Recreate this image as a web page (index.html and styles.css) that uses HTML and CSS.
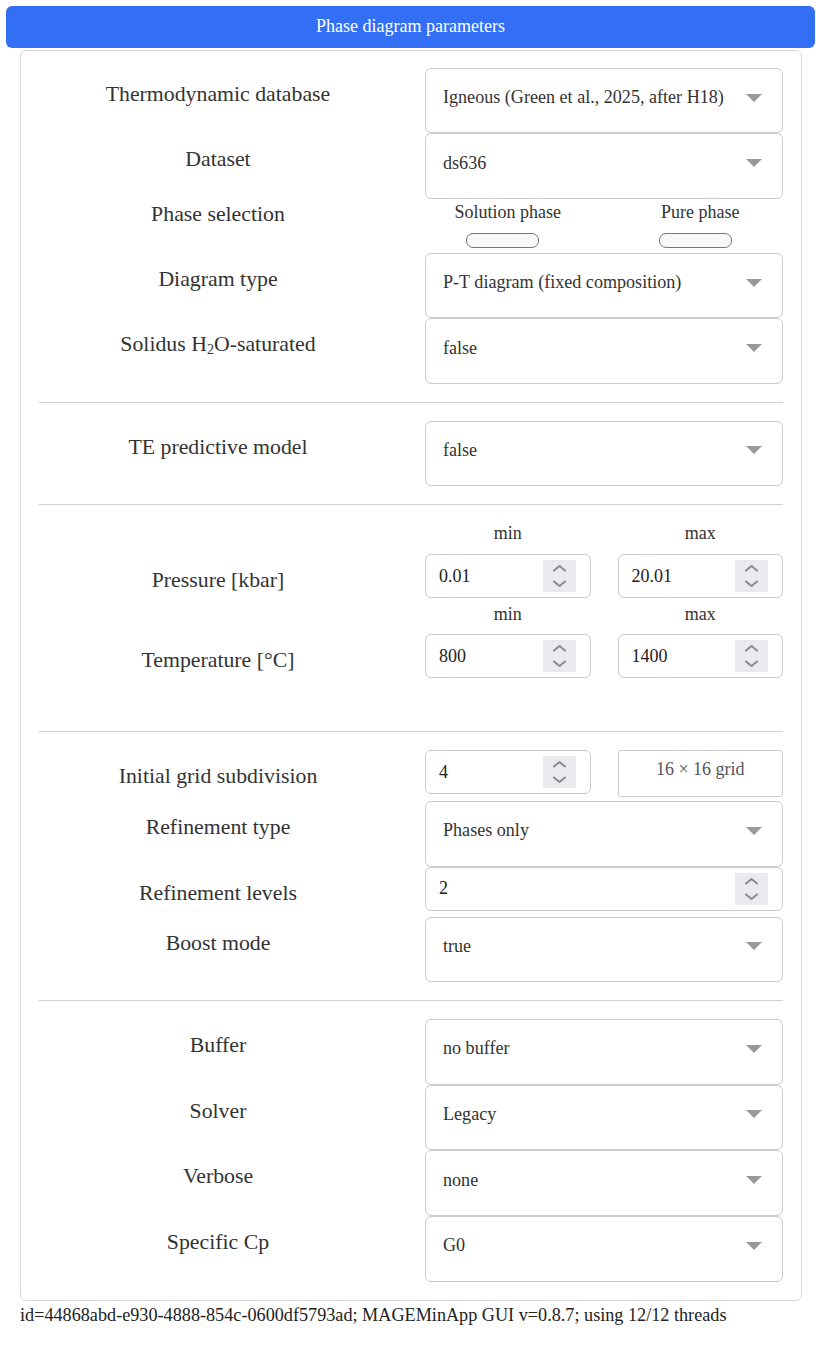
FILE: index.html
```html
<!DOCTYPE html>
<html>
<head>
<meta charset="utf-8">
<link rel="stylesheet" href="styles.css">
</head>
<body>
<div class="header">Phase diagram parameters</div>
<div class="card">
  <div class="row">
    <div class="label">Thermodynamic database</div>
    <div class="select"><span>Igneous (Green et al., 2025, after H18)</span><i class="caret"></i></div>
  </div>
  <div class="row">
    <div class="label">Dataset</div>
    <div class="select"><span>ds636</span><i class="caret"></i></div>
  </div>
  <div class="row phase-row">
    <div class="label label-tight">Phase selection</div>
    <div class="pair">
      <div class="phase-col"><div class="small">Solution phase</div><div class="pill"></div></div>
      <div class="phase-col"><div class="small">Pure phase</div><div class="pill"></div></div>
    </div>
  </div>
  <div class="row">
    <div class="label">Diagram type</div>
    <div class="select"><span>P-T diagram (fixed composition)</span><i class="caret"></i></div>
  </div>
  <div class="row">
    <div class="label">Solidus H<sub>2</sub>O-saturated</div>
    <div class="select"><span>false</span><i class="caret"></i></div>
  </div>
  <hr class="sep">
  <div class="row">
    <div class="label">TE predictive model</div>
    <div class="select"><span>false</span><i class="caret"></i></div>
  </div>
  <hr class="sep sep-range">
  <div class="range">
    <div class="row-top">
      <div></div>
      <div class="pair"><div class="small center">min</div><div class="small center">max</div></div>
    </div>
    <div class="row">
      <div class="label">Pressure [kbar]</div>
      <div class="pair">
        <div class="num"><span>0.01</span><b class="spin"><svg viewBox="0 0 33 32" width="33" height="32"><path d="M11 10.5 16.5 6 22 10.5M11 21.5 16.5 26 22 21.5" fill="none" stroke="#8a8a92" stroke-width="2" stroke-linecap="round" stroke-linejoin="round"/></svg></b></div>
        <div class="num"><span>20.01</span><b class="spin"><svg viewBox="0 0 33 32" width="33" height="32"><path d="M11 10.5 16.5 6 22 10.5M11 21.5 16.5 26 22 21.5" fill="none" stroke="#8a8a92" stroke-width="2" stroke-linecap="round" stroke-linejoin="round"/></svg></b></div>
      </div>
    </div>
    <div class="row-top row-top-2">
      <div></div>
      <div class="pair"><div class="small center">min</div><div class="small center">max</div></div>
    </div>
    <div class="row">
      <div class="label">Temperature [°C]</div>
      <div class="pair">
        <div class="num"><span>800</span><b class="spin"><svg viewBox="0 0 33 32" width="33" height="32"><path d="M11 10.5 16.5 6 22 10.5M11 21.5 16.5 26 22 21.5" fill="none" stroke="#8a8a92" stroke-width="2" stroke-linecap="round" stroke-linejoin="round"/></svg></b></div>
        <div class="num"><span>1400</span><b class="spin"><svg viewBox="0 0 33 32" width="33" height="32"><path d="M11 10.5 16.5 6 22 10.5M11 21.5 16.5 26 22 21.5" fill="none" stroke="#8a8a92" stroke-width="2" stroke-linecap="round" stroke-linejoin="round"/></svg></b></div>
      </div>
    </div>
  </div>
  <hr class="sep sep-grid">
  <div class="row row-grid">
    <div class="label">Initial grid subdivision</div>
    <div class="pair">
      <div class="num"><span>4</span><b class="spin"><svg viewBox="0 0 33 32" width="33" height="32"><path d="M11 10.5 16.5 6 22 10.5M11 21.5 16.5 26 22 21.5" fill="none" stroke="#8a8a92" stroke-width="2" stroke-linecap="round" stroke-linejoin="round"/></svg></b></div>
      <div class="gridbox">16 × 16 grid</div>
    </div>
  </div>
  <div class="row">
    <div class="label">Refinement type</div>
    <div class="select"><span>Phases only</span><i class="caret"></i></div>
  </div>
  <div class="row row-levels">
    <div class="label">Refinement levels</div>
    <div class="num"><span>2</span><b class="spin"><svg viewBox="0 0 33 32" width="33" height="32"><path d="M11 10.5 16.5 6 22 10.5M11 21.5 16.5 26 22 21.5" fill="none" stroke="#8a8a92" stroke-width="2" stroke-linecap="round" stroke-linejoin="round"/></svg></b></div>
  </div>
  <div class="row">
    <div class="label">Boost mode</div>
    <div class="select"><span>true</span><i class="caret"></i></div>
  </div>
  <hr class="sep">
  <div class="group-last">
    <div class="row">
      <div class="label">Buffer</div>
      <div class="select"><span>no buffer</span><i class="caret"></i></div>
    </div>
    <div class="row">
      <div class="label">Solver</div>
      <div class="select"><span>Legacy</span><i class="caret"></i></div>
    </div>
    <div class="row">
      <div class="label">Verbose</div>
      <div class="select"><span>none</span><i class="caret"></i></div>
    </div>
    <div class="row">
      <div class="label">Specific Cp</div>
      <div class="select"><span>G0</span><i class="caret"></i></div>
    </div>
  </div>
</div>
<div class="footer">id=44868abd-e930-4888-854c-0600df5793ad; MAGEMinApp GUI v=0.8.7; using 12/12 threads</div>
</body>
</html>
```
FILE: styles.css
```css
html, body {
  margin: 0;
  padding: 0;
  background: #fff;
}
body {
  font-family: "Liberation Serif", "Times New Roman", serif;
  color: #333;
  padding: 6px 1px 0 6px;
}
.header {
  background: #336ff5;
  color: #fff;
  height: 42px;
  border-radius: 6px;
  display: flex;
  align-items: center;
  justify-content: center;
  font-size: 18px;
  padding-bottom: 2px;
  box-sizing: border-box;
}
.card {
  margin: 2px 0 0 14px;
  width: 782px;
  box-sizing: border-box;
  border: 1px solid #d9d9d9;
  border-radius: 6px;
  padding: 17px 18px 18px 18px;
}
.row {
  display: grid;
  grid-template-columns: 1fr 1fr;
  column-gap: 28px;
}
.label {
  text-align: center;
  font-size: 21.8px;
  line-height: 24px;
  padding-top: 14px;
  color: #333;
}
.label sub {
  font-size: 14px;
  line-height: 0;
  vertical-align: -3px;
}
.select {
  height: 65.4px;
  box-sizing: border-box;
  border: 1px solid #ccc;
  border-radius: 6px;
  display: flex;
  align-items: center;
  justify-content: space-between;
  padding: 0 20px 6px 17px;
  font-size: 18.1px;
  color: #333;
}
.group-last .select {
  height: 65.7px;
}
.caret {
  width: 0;
  height: 0;
  border-left: 8px solid transparent;
  border-right: 8px solid transparent;
  border-top: 8px solid #999;
}
.pair {
  display: grid;
  grid-template-columns: 1fr 1fr;
  column-gap: 27px;
}
.phase-row {
  height: 54.2px;
}
.label-tight {
  padding-top: 3px;
}
.phase-col {
  display: flex;
  flex-direction: column;
  align-items: center;
}
.small {
  font-size: 18px;
  line-height: 20px;
  color: #333;
}
.phase-col .small {
  padding-top: 3px;
}
.pill {
  width: 73px;
  height: 15px;
  box-sizing: border-box;
  border: 1px solid #777;
  border-radius: 7px;
  background: #f8f8f8;
  margin-top: 11px;
  margin-right: 10px;
}
.center {
  text-align: center;
}
.sep {
  border: 0;
  border-top: 1px solid #d0d0d0;
  margin: 18px 0 18px;
  height: 0;
}
.sep-range {
  margin-bottom: 18px;
}
.row-top {
  display: grid;
  grid-template-columns: 1fr 1fr;
  column-gap: 28px;
  height: 20px;
  margin-bottom: 11px;
}
.row-top-2 {
  margin-top: 6px;
  margin-bottom: 10px;
}
.num {
  height: 44px;
  box-sizing: border-box;
  border: 1px solid #ccc;
  border-radius: 6px;
  display: flex;
  align-items: center;
  justify-content: space-between;
  padding: 0 14px 0 13px;
  font-size: 18px;
  color: #222;
}
.spin {
  width: 33px;
  height: 32px;
  background: #e9e9ee;
  display: block;
}
.spin svg {
  display: block;
}
.range {
  padding-bottom: 35px;
}
.row-grid {
  height: 51px;
}
.gridbox {
  height: 47px;
  box-sizing: border-box;
  border: 1px solid #ccc;
  border-radius: 3px;
  text-align: center;
  font-size: 18px;
  line-height: 20px;
  padding-top: 8px;
  color: #555;
}
.row-levels {
  height: 50px;
}
.footer {
  margin: 4px 0 0 14px;
  font-size: 18.2px;
  line-height: 20px;
  color: #222;
}
```
